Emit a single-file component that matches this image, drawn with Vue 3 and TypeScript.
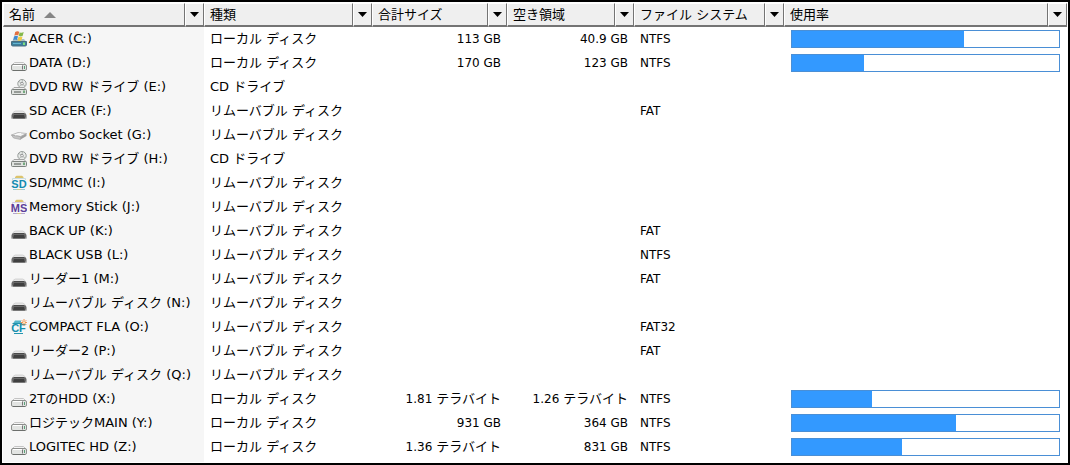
<script setup lang="ts">
type IconKind = 'system' | 'disk' | 'optical' | 'removable' | 'socket' | 'sd' | 'ms' | 'cf'

interface Amount {
  value: string
  unit: string
}

interface Drive {
  icon: IconKind
  name: string
  type: string
  total?: Amount
  free?: Amount
  fs?: string
  used?: number
}

interface Column {
  key: string
  label: string
  sorted?: boolean
}

const LOCAL = 'ローカル ディスク'
const REMOVABLE = 'リムーバブル ディスク'
const CD = 'CD ドライブ'
const TB = 'テラバイト'

const columns: Column[] = [
  { key: 'name', label: '名前', sorted: true },
  { key: 'type', label: '種類' },
  { key: 'total', label: '合計サイズ' },
  { key: 'free', label: '空き領域' },
  { key: 'fs', label: 'ファイル システム' },
  { key: 'usage', label: '使用率' },
]

const drives: Drive[] = [
  { icon: 'system', name: 'ACER (C:)', type: LOCAL, total: { value: '113', unit: 'GB' }, free: { value: '40.9', unit: 'GB' }, fs: 'NTFS', used: 64.4 },
  { icon: 'disk', name: 'DATA (D:)', type: LOCAL, total: { value: '170', unit: 'GB' }, free: { value: '123', unit: 'GB' }, fs: 'NTFS', used: 27 },
  { icon: 'optical', name: 'DVD RW ドライブ (E:)', type: CD },
  { icon: 'removable', name: 'SD ACER (F:)', type: REMOVABLE, fs: 'FAT' },
  { icon: 'socket', name: 'Combo Socket (G:)', type: REMOVABLE },
  { icon: 'optical', name: 'DVD RW ドライブ (H:)', type: CD },
  { icon: 'sd', name: 'SD/MMC (I:)', type: REMOVABLE },
  { icon: 'ms', name: 'Memory Stick (J:)', type: REMOVABLE },
  { icon: 'removable', name: 'BACK UP (K:)', type: REMOVABLE, fs: 'FAT' },
  { icon: 'removable', name: 'BLACK USB (L:)', type: REMOVABLE, fs: 'NTFS' },
  { icon: 'removable', name: 'リーダー1 (M:)', type: REMOVABLE, fs: 'FAT' },
  { icon: 'removable', name: 'リムーバブル ディスク (N:)', type: REMOVABLE },
  { icon: 'cf', name: 'COMPACT FLA (O:)', type: REMOVABLE, fs: 'FAT32' },
  { icon: 'removable', name: 'リーダー2 (P:)', type: REMOVABLE, fs: 'FAT' },
  { icon: 'removable', name: 'リムーバブル ディスク (Q:)', type: REMOVABLE },
  { icon: 'disk', name: '2TのHDD (X:)', type: LOCAL, total: { value: '1.81', unit: TB }, free: { value: '1.26', unit: TB }, fs: 'NTFS', used: 30 },
  { icon: 'disk', name: 'ロジテックMAIN (Y:)', type: LOCAL, total: { value: '931', unit: 'GB' }, free: { value: '364', unit: 'GB' }, fs: 'NTFS', used: 61.4 },
  { icon: 'disk', name: 'LOGITEC HD (Z:)', type: LOCAL, total: { value: '1.36', unit: TB }, free: { value: '831', unit: 'GB' }, fs: 'NTFS', used: 41.2 },
]
</script>

<template>
  <main class="window">
    <table class="list">
      <colgroup>
        <col v-for="c in columns" :key="c.key" :class="'col-' + c.key" />
      </colgroup>
      <thead>
        <tr>
          <th v-for="c in columns" :key="c.key" scope="col" :aria-sort="c.sorted ? 'ascending' : undefined">
            <div class="head">
              <button type="button" class="label">
                {{ c.label }}
                <svg v-if="c.sorted" class="sort" width="12" height="6" viewBox="0 0 12 6" aria-hidden="true">
                  <path d="M6 0L12 6H0z" fill="#858585" />
                </svg>
              </button>
              <button type="button" class="drop" :aria-label="c.label + ' フィルター'">
                <svg width="9" height="5" viewBox="0 0 9 5" aria-hidden="true"><path d="M0 0H9L4.5 5z" fill="#000" /></svg>
              </button>
            </div>
          </th>
        </tr>
      </thead>
      <tbody>
        <tr v-for="d in drives" :key="d.name">
          <td class="name">
            <div class="entry">
              <svg class="icon" width="16" height="16" viewBox="0 0 16 16" aria-hidden="true">
                <g v-if="d.icon === 'system'">
                  <path d="M.5 11L3 8H13L15.5 11z" fill="#a9bfc6" />
                  <path d="M.5 10.5H15.500V14Q15.500 15 14 15H2Q.5 15 .5 14z" fill="#3d7f9c" stroke="#486f80" />
                  <path d="M2 12.5H10" stroke="#62b4d0" />
                  <path d="M12 11.500h2v2.500h-2z" fill="#7fe07f" />
                  <path d="M4.200 1Q6.200 -.4 8.200 .8L7.300 4.500Q5.300 3.400 3.300 4.800z" fill="#e3703f" />
                  <path d="M8.700 1.200Q10.700 2.400 12.700 .9L11.700 4.700Q9.700 6 7.700 4.800z" fill="#84b84c" />
                  <path d="M3 5.400Q5 4.200 7 5.300L6 9Q4 7.900 2.100 9.200z" fill="#4089cf" />
                  <path d="M7.500 5.500Q9.500 6.600 11.500 5.400L10.500 9.200Q8.500 10.400 6.500 9.200z" fill="#f1cb45" />
                </g>
                <g v-else-if="d.icon === 'disk'">
                  <path d="M1 10L3.500 7.500H12.500L15 10z" fill="#f4f4f4" stroke="#c4c4c4" />
                  <rect x=".5" y="9.500" width="15" height="6" rx="1.500" fill="#e2e4e2" stroke="#8d8f8d" />
                  <path d="M2 10.500H11" stroke="#fff" />
                  <path d="M2 15.500H14" stroke="#6c6f6c" />
                  <path d="M11.500 10.500V14.500" stroke="#777" />
                  <path d="M13.500 11V14" stroke="#5aa077" />
                </g>
                <g v-else-if="d.icon === 'optical'">
                  <circle cx="11" cy="4.700" r="4.200" fill="#e9ecea" stroke="#969b98" />
                  <path d="M8 2.500L10 4M11.500 .8L11 3.500M14 7L12.200 5.800M8 7.500L10 6" stroke="#b4b8b6" />
                  <circle cx="11" cy="4.700" r="1.300" fill="#fff" stroke="#777" stroke-width=".7" />
                  <path d="M1 10.500L3 8.500H13L15 10.500z" fill="#eee" stroke="#a4a4a4" />
                  <rect x=".5" y="10.500" width="15" height="5" rx="1" fill="#dfe2df" stroke="#7d827e" />
                  <path d="M3 13H10" stroke="#4f5550" />
                  <path d="M13 11.500V14" stroke="#50965f" stroke-width="1.500" />
                </g>
                <g v-else-if="d.icon === 'removable'">
                  <path d="M1.500 11Q2.500 8 4.500 8H11.500Q13.500 8 14.500 11z" fill="#e6e6e6" stroke="#c2c2c2" stroke-width=".6" />
                  <path d="M.5 12Q1 10 3 10H13Q15 10 15.500 12V15.500H.5z" fill="#6a6a6a" />
                  <path d="M3 12H13L14 15.500H2z" fill="#404040" />
                  <path d="M3 10.500H13" stroke="#4a4a4a" />
                  <path d="M.5 13V15.500H2zM15.500 13V15.500H14z" fill="#aaa" />
                </g>
                <g v-else-if="d.icon === 'socket'">
                  <path d="M.5 8L7 5.500L15.500 6.500L9.500 9.500z" fill="#f2f2f2" stroke="#bcbcbc" />
                  <path d="M.5 8L9.500 9.700V12.500L2.500 11z" fill="#c4c4c4" stroke="#9c9c9c" stroke-width=".6" />
                  <path d="M9.500 9.700L15.500 6.500V9L9.500 12.500z" fill="#a0a0a0" />
                  <path d="M4 8L10 6.500" stroke="#fff" />
                </g>
                <g v-else-if="d.icon === 'sd'">
                  <path d="M4 3.500V2L5.500 .7H11L12.500 2V3.500z" fill="#dcc36c" />
                  <path d="M1.500 5V3.500H14.500V5" fill="none" stroke="#c9dde2" />
                  <text x="8" y="12.500" class="badge sd">SD</text>
                  <path d="M2 14.500H6M10 14.500H14" stroke="#9bc9d5" />
                  <path d="M6 14.500H10" stroke="#d8c988" />
                </g>
                <g v-else-if="d.icon === 'ms'">
                  <path d="M4 3.500V2L5.500 .7H11L12.500 2V3.500z" fill="#dcc36c" />
                  <path d="M1.500 5V3.500H14.500V5" fill="none" stroke="#d5cde4" />
                  <text x="8" y="12.500" class="badge ms">MS</text>
                  <path d="M2 14.500H6M10 14.500H14" stroke="#b3a4d0" />
                  <path d="M6 14.500H10" stroke="#d8c988" />
                </g>
                <g v-else>
                  <path d="M2 4.500L4 1.500H10V5H2z" fill="#55b5c9" />
                  <path d="M1.500 4.500H11M3 14.500H12" stroke="#2495ae" />
                  <text x="7.500" y="13" class="badge cf">CF</text>
                  <path d="M13 0V7M9.500 3.500H16M10.700 1.200L15.300 5.800M15.300 1.200L10.700 5.800" stroke="#ee8a48" stroke-width=".9" />
                  <circle cx="13" cy="3.500" r="1" fill="#fff3c2" />
                </g>
              </svg>
              <span>{{ d.name }}</span>
            </div>
          </td>
          <td>{{ d.type }}</td>
          <td class="num"><template v-if="d.total">{{ d.total.value }} <span :class="{ kana: d.total.unit === TB }">{{ d.total.unit }}</span></template></td>
          <td class="num"><template v-if="d.free">{{ d.free.value }} <span :class="{ kana: d.free.unit === TB }">{{ d.free.unit }}</span></template></td>
          <td class="fs">{{ d.fs }}</td>
          <td class="usage">
            <div v-if="d.used !== undefined" class="bar" role="meter" aria-valuemin="0" aria-valuemax="100" :aria-valuenow="d.used" :aria-label="d.name">
              <div class="fill" :style="{ width: d.used + '%' }"></div>
            </div>
          </td>
        </tr>
      </tbody>
      <tfoot aria-hidden="true">
        <tr>
          <td class="name"></td>
          <td colspan="5"></td>
        </tr>
      </tfoot>
    </table>
  </main>
</template>

<style>
body {
  margin: 0;
  background: #fff;
}
</style>

<style scoped>
.window {
  box-sizing: border-box;
  min-height: 100vh;
  border: 2px solid #000;
  padding: 1px;
  background: #fff;
  color: #000;
  font: 13px/24px "DejaVu Sans", "Noto Sans CJK JP", sans-serif;
}

.list {
  width: 100%;
  table-layout: fixed;
  border-collapse: collapse;
}

.col-name { width: 201px; }
.col-type { width: 168px; }
.col-total { width: 135px; }
.col-free { width: 127px; }
.col-fs { width: 150px; }

th,
td {
  padding: 0;
  font-weight: normal;
  text-align: left;
  white-space: nowrap;
}

.head {
  display: flex;
  height: 24px;
}

.head button {
  box-sizing: border-box;
  height: 24px;
  margin: 0;
  border: solid;
  border-width: 1px 1px 2px;
  border-color: #fff #747474 #747474 #fff;
  border-radius: 0;
  background: #efefef;
  color: #000;
  font: inherit;
}

.head .label {
  display: flex;
  flex: 1;
  align-items: center;
  gap: 9px;
  min-width: 0;
  padding: 0 5px;
}

.head .drop {
  display: flex;
  width: 19px;
  align-items: center;
  justify-content: center;
  padding: 0;
}

tbody td {
  height: 24px;
  padding-left: 6px;
}

tbody tr > td {
  line-height: 22px;
}

.name {
  background: #f6f6f6;
}

tbody .name {
  padding-left: 8px;
}

.entry {
  display: flex;
  align-items: center;
  gap: 2px;
}

.icon {
  flex: none;
}

.badge {
  font: bold 11px "Liberation Sans", sans-serif;
  text-anchor: middle;
}

.sd { fill: #138bb0; }
.ms { fill: #5c3d99; }
.cf { fill: #128fae; }

tbody .num {
  padding-right: 6px;
  text-align: right;
}

.num,
.fs {
  font-size: 12px;
}

.kana {
  font-size: 13px;
}

tbody .usage {
  padding: 0 7px;
}

.bar {
  box-sizing: border-box;
  height: 18px;
  border: 1px solid #4a8fd6;
}

.fill {
  height: 16px;
  background: #39f;
}

tfoot td {
  height: 3px;
}
</style>
